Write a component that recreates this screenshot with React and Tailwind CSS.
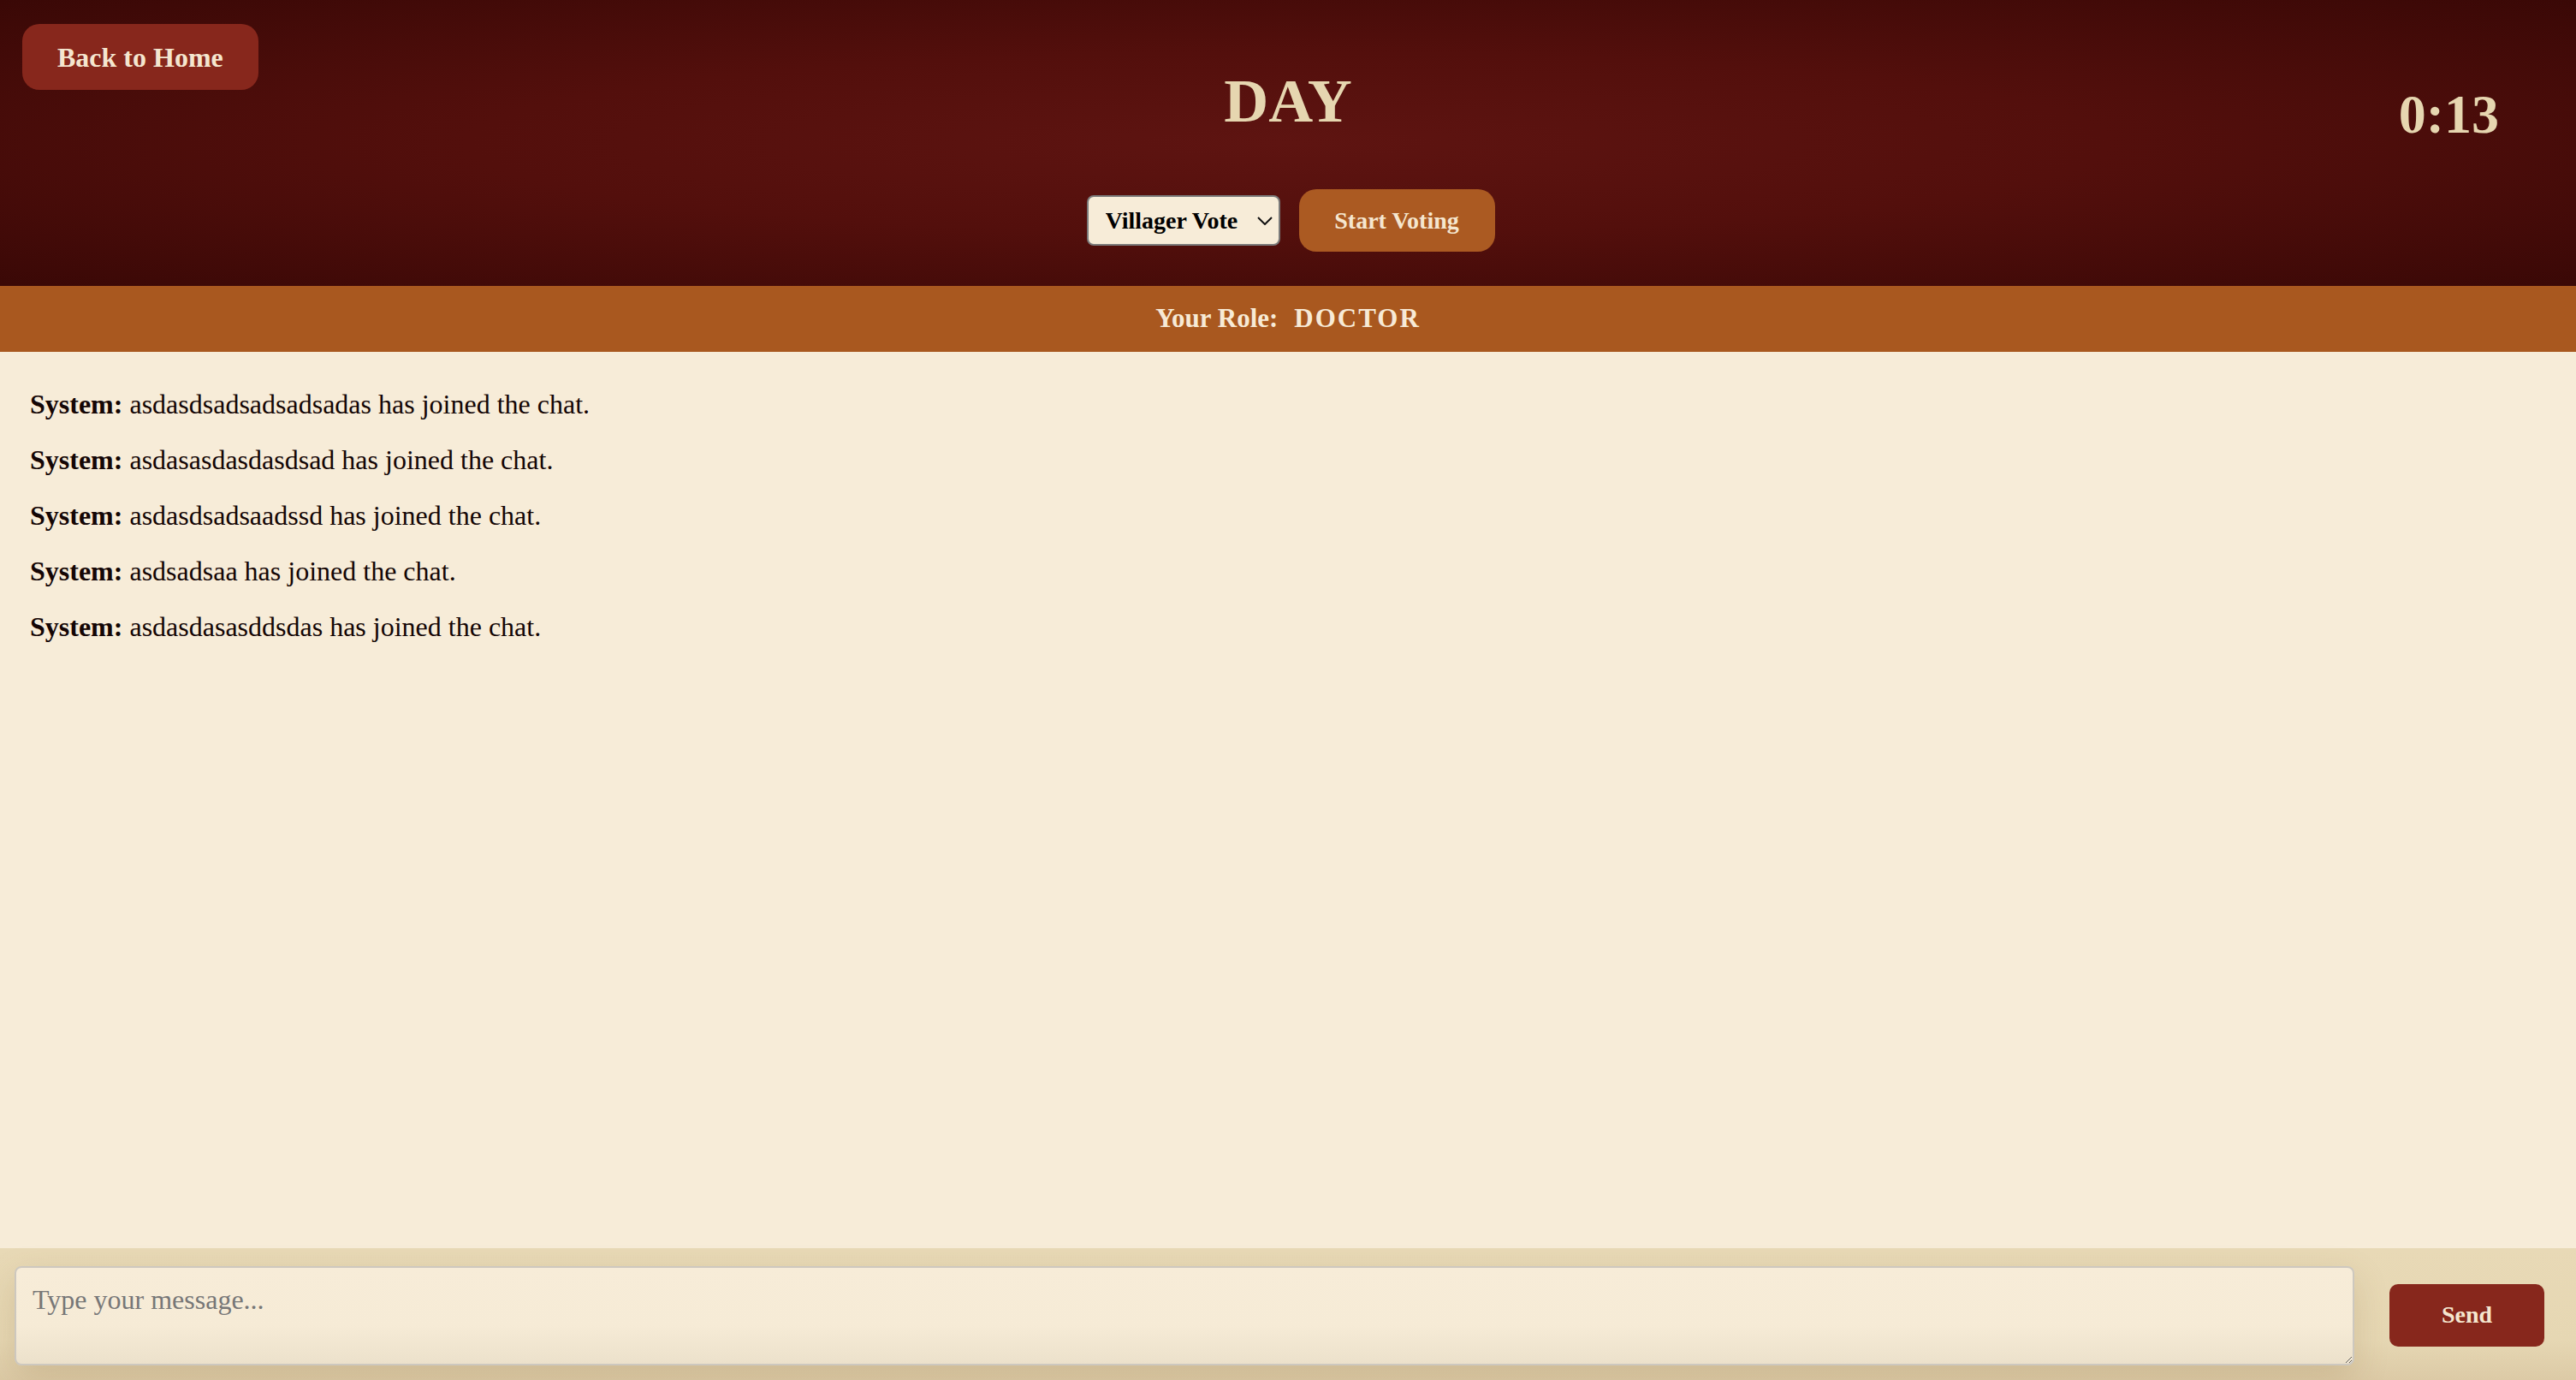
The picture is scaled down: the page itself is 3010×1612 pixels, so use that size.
import React from "react";

const messages = [
  "asdasdsadsadsadsadas has joined the chat.",
  "asdasasdasdasdsad has joined the chat.",
  "asdasdsadsaadssd has joined the chat.",
  "asdsadsaa has joined the chat.",
  "asdasdasasddsdas has joined the chat.",
];

export default function App() {
  return (
    <div className="h-screen w-full flex flex-col font-['Liberation_Serif','Times_New_Roman',serif] overflow-hidden">
      {/* Header */}
      <header className="grid grid-cols-[1fr_auto_1fr] items-start h-[334px] bg-[radial-gradient(ellipse_at_center,#5e1411_0%,#530f0c_45%,#3a0806_100%)]">
        <div className="pl-[26px] pt-[28px]">
          <button className="h-[77px] px-[41px] rounded-[20px] bg-[#87271c] text-[#f5e6cf] text-[32px] font-bold leading-none">
            Back to Home
          </button>
        </div>
        <div className="flex flex-col items-center pt-[77px]">
          <h1 className="text-[72px] leading-[83px] font-bold text-[#e6d6b0]">DAY</h1>
          <div className="mt-[61px] pl-[6px] flex items-center gap-[22px]">
            <div className="relative">
              <select
                defaultValue="villager"
                className="appearance-none w-[226px] h-[59px] pl-[20px] pr-[40px] border-2 border-[#7a7a7a] rounded-[8px] bg-[#f7ecd8] text-[28px] font-bold text-black font-['Liberation_Serif','Times_New_Roman',serif] outline-none"
              >
                <option value="villager">Villager Vote</option>
                <option value="werewolf">Werewolf Vote</option>
              </select>
              <svg
                className="pointer-events-none absolute left-[199px] top-[25px]"
                width="18"
                height="10"
                viewBox="0 0 18 10"
                fill="none"
              >
                <path d="M1 1L9 9L17 1" stroke="#111" strokeWidth="2" />
              </svg>
            </div>
            <button className="w-[229px] h-[73px] rounded-[20px] bg-[#ab5a22] text-[#f5e6cf] text-[28px] font-bold leading-none">
              Start Voting
            </button>
          </div>
        </div>
        <div className="flex justify-end pr-[90px] pt-[97px]">
          <div className="text-[64px] leading-[74px] font-bold text-[#e6d6b0]">0:13</div>
        </div>
      </header>

      {/* Role bar */}
      <div className="h-[77px] shrink-0 flex items-center justify-center bg-[#a9581f] text-[#f7ead6] text-[31px] font-bold">
        <span>Your Role:</span>
        <span className="ml-[19px] tracking-[2px]">DOCTOR</span>
      </div>

      {/* Chat */}
      <div className="flex-1 bg-[#f7ecd8] pt-[29px] pl-[35px] text-[#140605] text-[32px]">
        {messages.map((m, i) => (
          <div key={i} className="leading-[65px]">
            <span className="font-bold">System:</span> {m}
          </div>
        ))}
      </div>

      {/* Input bar */}
      <div className="h-[154px] shrink-0 flex items-center gap-[41px] pl-[17px] pr-[37px] bg-[linear-gradient(180deg,#e8d9b6_0%,#e6d7b3_70%,#dccaa6_100%)]">
        <textarea
          placeholder="Type your message..."
          className="flex-1 h-[116px] mt-[4px] px-[19px] pt-[13px] pb-[19px] border-2 border-[#cdc8bf] rounded-[8px] bg-[linear-gradient(180deg,#f7ecd8_0%,#f6ebd6_60%,#ece1cb_100%)] text-[32px] text-[#140605] placeholder:text-[#777] font-['Liberation_Serif','Times_New_Roman',serif] outline-none shadow-[0_14px_40px_rgba(120,90,40,0.18)]"
        />
        <button className="w-[181px] h-[73px] mt-[2px] rounded-[10px] bg-[#87271c] text-[#f5e6cf] text-[28px] font-bold leading-none">
          Send
        </button>
      </div>
    </div>
  );
}
